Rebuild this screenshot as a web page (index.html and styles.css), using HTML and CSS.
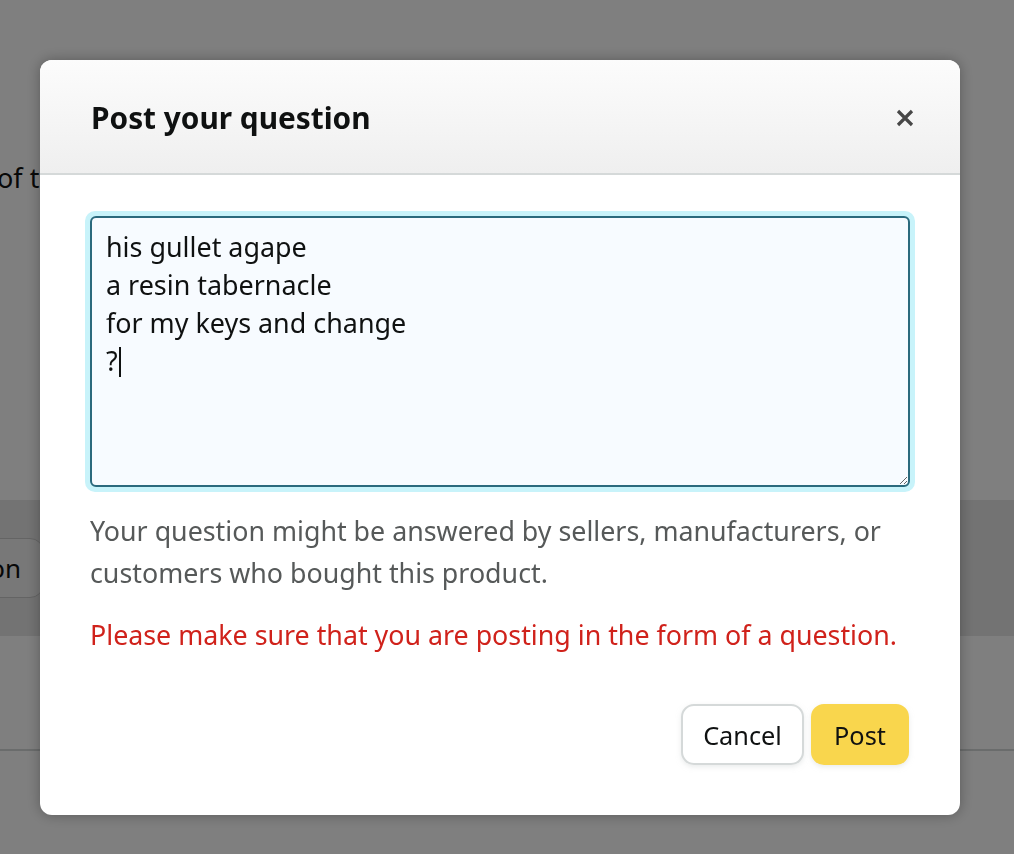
FILE: index.html
```html
<!DOCTYPE html>
<html>
<head>
<meta charset="utf-8">
<link rel="stylesheet" href="styles.css">
</head>
<body>
<div class="page">
  <p class="page-text">of the product listing you are viewing</p>
  <div class="page-band">
    <button class="page-btn">Ask a question</button>
  </div>
  <div class="page-rule"></div>
</div>
<div class="overlay"></div>
<div class="modal" role="dialog">
  <header class="modal-head">
    <h1 class="modal-title">Post your question</h1>
    <button class="close" aria-label="Close">
      <svg width="18" height="18" viewBox="0 0 18 18"><path d="M2 2L16 16M16 2L2 16" stroke="#474747" stroke-width="3.2" stroke-linecap="butt"/></svg>
    </button>
  </header>
  <div class="modal-body">
    <div class="ring">
      <div class="question" role="textbox" aria-multiline="true">his gullet agape
a resin tabernacle
for my keys and change
?<span class="caret"></span></div>
    </div>
    <p class="hint">Your question might be answered by sellers, manufacturers, or customers who bought this product.</p>
    <p class="error">Please make sure that you are posting in the form of a question.</p>
    <div class="actions">
      <button class="btn btn-cancel">Cancel</button>
      <button class="btn btn-post">Post</button>
    </div>
  </div>
</div>
</body>
</html>
```
FILE: styles.css
```css
html, body {
  margin: 0;
  padding: 0;
  height: 100%;
}
body {
  font-family: "Noto Sans", "Open Sans", sans-serif;
  background: #ffffff;
  color: #0f1111;
  overflow: hidden;
}
.page {
  padding-top: 158px;
}
.page-text {
  margin: 0 0 0 -3px;
  font-size: 27px;
  line-height: 40px;
  white-space: nowrap;
  color: #0f1111;
}
.page-band {
  margin-top: 302px;
  height: 136px;
  background: #e6e6e6;
  display: flex;
  align-items: center;
}
.page-btn {
  margin-left: -180px;
  height: 60px;
  padding: 0 22px;
  border: 1px solid #c8c8c8;
  border-radius: 14px;
  background: #f0f0f0;
  font-family: inherit;
  font-size: 26px;
  color: #0f1111;
  white-space: nowrap;
}
.page-rule {
  margin-top: 113px;
  height: 2px;
  background: #d5d9d9;
}
.overlay {
  position: fixed;
  inset: 0;
  background: rgba(0, 0, 0, 0.5);
}
.modal {
  position: fixed;
  left: 40px;
  top: 60px;
  width: 920px;
  background: #fff;
  border-radius: 12px;
  box-shadow: 0 0 14px rgba(0, 0, 0, 0.3);
  overflow: hidden;
}
.modal-head {
  height: 115px;
  box-sizing: border-box;
  display: flex;
  align-items: center;
  justify-content: space-between;
  padding: 2px 46px 0 51px;
  background: linear-gradient(#fcfcfc, #efefef);
  border-bottom: 2px solid #d5d9d9;
}
.modal-title {
  margin: 0;
  font-size: 29.8px;
  font-weight: 700;
  color: #0f1111;
}
.close {
  border: 0;
  background: none;
  padding: 0;
  width: 18px;
  height: 18px;
  display: flex;
}
.modal-body {
  padding: 36px 50px 50px 45px;
}
.ring {
  width: 830px;
  border-radius: 10px;
  background: #c8f3fa;
  padding: 5px;
  box-sizing: border-box;
  display: flex;
}
.question {
  display: block;
  width: 820px;
  height: 271px;
  box-sizing: border-box;
  border: 2px solid #2b6a7d;
  border-radius: 6px;
  background: #f7fbff;
  padding: 10px 14px;
  font-size: 26.9px;
  line-height: 38px;
  color: #0f1111;
  white-space: pre-wrap;
  overflow: auto;
  resize: both;
}
.caret {
  display: inline-block;
  width: 2px;
  height: 30px;
  background: #0f1111;
  vertical-align: -6px;
  margin-left: 1px;
}
.hint {
  margin: 18px 0 0 5px;
  font-size: 26.8px;
  line-height: 42px;
  color: #565959;
}
.error {
  margin: 20px 0 0 5px;
  font-size: 26.8px;
  line-height: 42px;
  color: #d0221b;
}
.actions {
  margin-top: 48px;
  display: flex;
  justify-content: flex-end;
  gap: 7px;
  padding-right: 1px;
}
.btn {
  height: 61px;
  box-sizing: border-box;
  border-radius: 13px;
  font-family: inherit;
  font-size: 25.3px;
  color: #0f1111;
  padding: 0;
  box-shadow: 0 2px 5px rgba(213, 217, 217, 0.5);
}
.btn-cancel {
  width: 123px;
  background: #fff;
  border: 2px solid #d5d9d9;
}
.btn-post {
  width: 98px;
  background: #f9d64d;
  border: 2px solid #f9d64d;
}
```
